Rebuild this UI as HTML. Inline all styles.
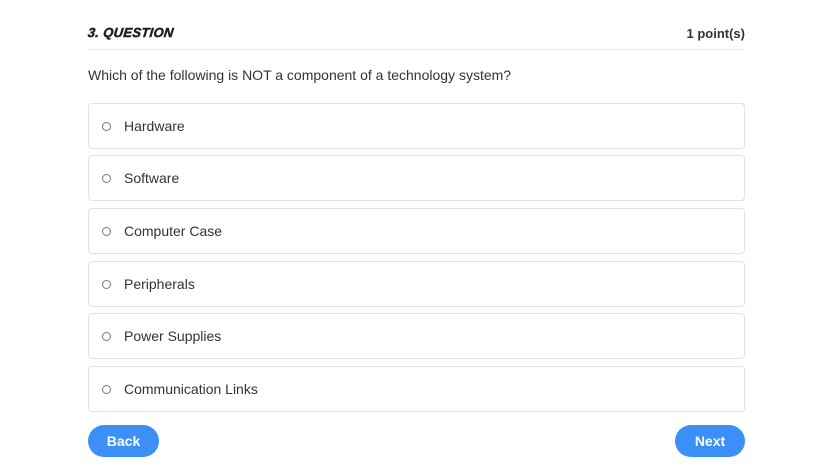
<!DOCTYPE html>
<html><head><meta charset="utf-8"><style>
body{margin:0;width:836px;height:470px;background:#fff;font-family:"Liberation Sans",sans-serif;position:relative;overflow:hidden}
.h{position:absolute;left:88px;top:25px;font-size:13px;font-weight:bold;font-style:italic;color:#1f1f1f;letter-spacing:0.3px;transform:skewX(-6deg);-webkit-text-stroke:0.5px #1f1f1f}
.pts{position:absolute;right:91px;top:26px;font-size:13px;font-weight:bold;color:#333}
.line{position:absolute;left:88px;width:657px;top:49px;height:1px;background:#ececec}
.q{position:absolute;left:88px;top:67px;font-size:14px;color:#333}
.opt{position:absolute;left:88px;width:655px;height:44px;border:1px solid #e2e2e6;border-radius:4px;box-sizing:content-box}
.opt span{position:absolute;left:35px;top:14px;font-size:14px;color:#333}
.opt i{position:absolute;left:13px;top:18px;width:7px;height:7px;border:1px solid #777;border-radius:50%}
.btn{position:absolute;top:425px;height:32px;border-radius:16px;background:#3b8ff6;color:#fff;font-weight:bold;font-size:14px;text-align:center;line-height:32px}
</style></head><body>
<div class="h">3. QUESTION</div>
<div class="pts">1 point(s)</div>
<div class="line"></div>
<div class="q">Which of the following is NOT a component of a technology system?</div>
<div class="opt" style="top:103px"><i></i><span>Hardware</span></div>
<div class="opt" style="top:155px"><i></i><span>Software</span></div>
<div class="opt" style="top:208px"><i></i><span>Computer Case</span></div>
<div class="opt" style="top:261px"><i></i><span>Peripherals</span></div>
<div class="opt" style="top:313px"><i></i><span>Power Supplies</span></div>
<div class="opt" style="top:366px"><i></i><span>Communication Links</span></div>
<div class="btn" style="left:88px;width:71px">Back</div>
<div class="btn" style="left:675px;width:70px">Next</div>
</body></html>
